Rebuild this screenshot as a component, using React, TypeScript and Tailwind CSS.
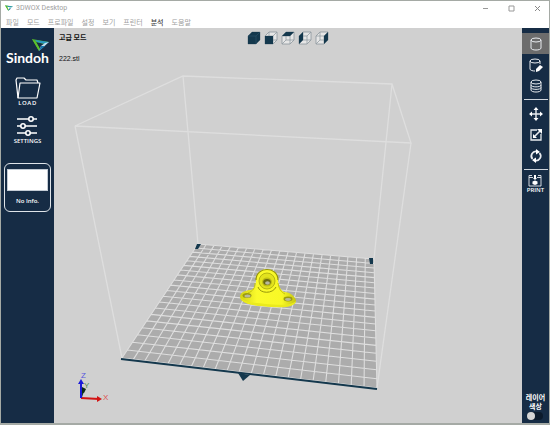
import React, { useState } from "react";

type Point = [number, number];

interface ToolProps {
  label: string;
  active?: boolean;
  onClick?: () => void;
  children: React.ReactNode;
}

const menuItems = [
  { label: "파일" },
  { label: "모드" },
  { label: "프로파일" },
  { label: "설정" },
  { label: "보기" },
  { label: "프린터" },
  { label: "분석", enabled: true },
  { label: "도움말" },
];

// filled face of each view cube
const viewCubes = [
  { label: "Perspective view", face: "M1 5 5 1H13V9L9 13H1Z" },
  { label: "Front view", face: "M1 5H9V13H1Z" },
  { label: "Top view", face: "M1 5 5 1H13L9 5Z" },
  { label: "Left view", face: "M1 5 5 1V9L1 13Z" },
  { label: "Right view", face: "M9 5 13 1V9L9 13Z" },
];

const cubeOutline = "M1 5 5 1H13V9L9 13H1Z";
const cubeEdges = "M1 5H9V13M9 5 13 1M5 1V9H13M5 9 1 13";

// build plate corners on screen: back left, back right, front right, front left
const plate: Point[] = [
  [198, 244],
  [374, 259],
  [377, 388],
  [122, 358],
];

const COLS = 21;
const ROWS = 20;

// maps the unit square onto the plate with perspective
function project(u: number, v: number): Point {
  const [[x0, y0], [x1, y1], [x2, y2], [x3, y3]] = plate;
  const dx1 = x1 - x2;
  const dx2 = x3 - x2;
  const dy1 = y1 - y2;
  const dy2 = y3 - y2;
  const sx = x0 - x1 + x2 - x3;
  const sy = y0 - y1 + y2 - y3;
  const det = dx1 * dy2 - dx2 * dy1;
  const g = (sx * dy2 - dx2 * sy) / det;
  const h = (dx1 * sy - sx * dy1) / det;
  const w = g * u + h * v + 1;
  return [
    ((x1 - x0 + g * x1) * u + (x3 - x0 + h * x3) * v + x0) / w,
    ((y1 - y0 + g * y1) * u + (y3 - y0 + h * y3) * v + y0) / w,
  ];
}

function gridPath() {
  const parts: string[] = [];
  for (let i = 0; i <= COLS; i++) {
    parts.push(`M${project(i / COLS, 0)}L${project(i / COLS, 1)}`);
  }
  for (let j = 0; j <= ROWS; j++) {
    parts.push(`M${project(0, j / ROWS)}L${project(1, j / ROWS)}`);
  }
  return parts.join("");
}

function Scene() {
  return (
    <svg
      viewBox="54 28 468 395"
      className="absolute inset-0 h-full w-full"
      role="img"
      aria-label="Build plate"
    >
      <defs>
        <linearGradient id="body" x1="0" y1="0" x2="1" y2="0">
          <stop offset="0" stopColor="#d2d216" />
          <stop offset=".3" stopColor="#fafa2c" />
          <stop offset=".75" stopColor="#f8f826" />
          <stop offset="1" stopColor="#c4c412" />
        </linearGradient>
      </defs>
      {/* Plate */}
      <polygon points={plate.join(" ")} fill="#acacac" />
      <path d={gridPath()} stroke="#dedede" strokeWidth="1.1" fill="none" />
      {/* Build volume */}
      <path
        d="M75 126 183 76 392 84 411 143ZM183 76 198 244M392 84 374 259M411 143 377 388M75 126 122 358"
        stroke="#dedede"
        strokeWidth="1.3"
        fill="none"
      />
      <path d="M121 359 377 389" stroke="#14384d" strokeWidth="2" />
      <path d="M238 373 250 375 243 381Z" fill="#14384d" />
      <path d="M197 244H201L198 249H195Z" fill="#14384d" />
      <path d="M369 258H373V264H370Z" fill="#14384d" />
      {/* Model */}
      <path
        d="M240 297C240 292 246 290 251 290C255 289 256 284 256 279C256 266 278 266 278 279C278 285 280 290 284 292C290 292 296 297 296 301C295 306 286 307 277 307C263 306 247 306 241 300Z"
        fill="url(#body)"
      />
      <path d="M240 297C244 303 256 303 266 304C278 305 291 306 296 301C295 307 284 308 272 307C260 306 243 306 240 297Z" fill="#eaea1c" />
      <path d="M256 280C256 266 278 266 278 280" stroke="#92920c" strokeWidth="1.2" fill="none" />
      <path d="M255 283C255 288 253 291 248 293M278 283C279 289 281 292 285 294" stroke="#c2c212" strokeWidth="1" fill="none" />
      <ellipse cx="267" cy="281" rx="8" ry="8" fill="#e2e21e" stroke="#a8a80f" strokeWidth=".8" />
      <path d="M258 287C260 294 273 294 276 287" stroke="#96960c" strokeWidth="1" fill="none" />
      <ellipse cx="267" cy="282" rx="5" ry="4.5" fill="#bebe14" />
      <ellipse cx="267" cy="282" rx="3.8" ry="3" fill="#6b6b12" />
      <ellipse cx="267.5" cy="283" rx="2.4" ry="1.7" fill="#b8b8a0" />
      <ellipse cx="247" cy="295.5" rx="4.5" ry="2.5" fill="#9b9b10" />
      <ellipse cx="247.5" cy="296" rx="3" ry="1.5" fill="#b9b99a" />
      <ellipse cx="288" cy="299" rx="4.5" ry="2.4" fill="#9b9b10" />
      <ellipse cx="288" cy="299.5" rx="3" ry="1.4" fill="#b9b99a" />
      {/* Axes */}
      <path d="M81 397 84 389" stroke="#123a1c" strokeWidth="2" />
      <path d="M82 387 86 389 84 393 81 392Z" fill="#0d2a14" />
      <path d="M81 398 99 399" stroke="#d31414" strokeWidth="1.8" />
      <path d="M97 396 102 399 97 402Z" fill="#d31414" />
      <path d="M81 398V383" stroke="#1a1ad8" strokeWidth="2" />
      <path d="M78 384 81 379 84 384Z" fill="#1a1ad8" />
      <g className="font-['Liberation_Sans'] text-[8px]">
        <text x="81" y="378" fill="#5757dd">Z</text>
        <text x="84" y="388" fill="#4c8a50">Y</text>
        <text x="103" y="400" fill="#dc5050">X</text>
      </g>
    </svg>
  );
}

function Mark({ className }: { className: string }) {
  return (
    <svg viewBox="0 0 17 12" className={className} aria-hidden="true">
      <path d="M0 0 17 3 12 5 4 3 8 10 7 12Z" fill="#4fb02f" />
      <path d="M0 0 4 3 8 10 7 12Z" fill="#5cc02c" />
      <path d="M3 1 17 3 13 5 5 3Z" fill="#2596c4" />
      <path d="M17 3 7 12 9 7 13 4Z" fill="#bfe2f0" />
      <path d="M9 7 7 12 13 7Z" fill="#1675ac" />
    </svg>
  );
}

function Tool({ label, active, onClick, children }: ToolProps) {
  return (
    <button
      aria-label={label}
      aria-pressed={active}
      onClick={onClick}
      className={`flex h-[21px] w-full items-center justify-center ${active ? "bg-[#6c6c6c]" : ""}`}
    >
      <svg
        viewBox="0 0 14 14"
        className="size-[14px]"
        fill="none"
        stroke="#e8ebef"
        strokeWidth="1"
      >
        {children}
      </svg>
    </button>
  );
}

function Sidebar() {
  return (
    <aside className="flex w-[53px] shrink-0 flex-col items-center bg-[#162c45] pt-[11px] text-white">
      <div className="flex flex-col">
        <Mark className="h-3 w-[17px] self-end" />
        <span className="font-['Lato'] text-[14px] leading-[14px] font-bold">Sindoh</span>
      </div>
      <button className="mt-3 flex flex-col items-center">
        <svg viewBox="0 0 26 22" className="h-[22px] w-[26px]" fill="none" stroke="#fff" strokeWidth="1.2" strokeLinejoin="round">
          <path d="M3 21 1 3 2 1H9L11 3H22L23 6" />
          <path d="M3 21 5 6H25L22 21Z" />
        </svg>
        <span className="font-['Open_Sans'] text-[6px] leading-2 font-semibold tracking-widest">LOAD</span>
      </button>
      <button className="mt-2 flex flex-col items-center">
        <svg viewBox="0 0 22 22" className="size-[22px]" stroke="#fff" strokeWidth="1.6" fill="#162c45">
          <path d="M1 4H21M1 11H21M1 18H21" />
          <circle cx="15" cy="4" r="2.2" />
          <circle cx="7" cy="11" r="2.2" />
          <circle cx="12" cy="18" r="2.2" />
        </svg>
        <span className="font-['Open_Sans'] text-[6px] leading-2 font-semibold">SETTINGS</span>
      </button>
      <section className="mt-[18px] flex h-[49px] w-[47px] flex-col items-center gap-1 rounded-md border border-[#dfe4e9] pt-[5px]">
        <div className="h-[22px] w-[41px] border border-[#c4ccd5] bg-white" />
        <span className="font-['Open_Sans'] text-[6px] leading-3 font-semibold">No Info.</span>
      </section>
    </aside>
  );
}

function ToolPanel() {
  const [mode, setMode] = useState("model");
  const [colored, setColored] = useState(false);

  return (
    <aside className="flex w-[27px] shrink-0 flex-col items-center bg-[#162c45] pt-[5px] text-white">
      <Tool label="Model" active={mode === "model"} onClick={() => setMode("model")}>
        <ellipse cx="7" cy="3" rx="5" ry="2" />
        <path d="M2 3V11C2 13.7 12 13.7 12 11V3" />
      </Tool>
      <Tool label="Edit support" active={mode === "support"} onClick={() => setMode("support")}>
        <ellipse cx="6" cy="3" rx="5" ry="2" />
        <path d="M1 3V11C1 12.5 4 13 6 13M11 3V6" />
        <path d="M7 11 11 7 14 9 10 13 7 14Z" fill="#fff" stroke="none" />
      </Tool>
      <Tool label="Layers" active={mode === "layers"} onClick={() => setMode("layers")}>
        <ellipse cx="7" cy="3" rx="5" ry="2" />
        <path d="M2 3V11C2 13.7 12 13.7 12 11V3M2 6C2 8.5 12 8.5 12 6M2 8.5C2 11 12 11 12 8.5" />
      </Tool>
      <hr className="my-[3px] w-6 border-[#cfd5dc]" />
      <Tool label="Move">
        <path d="M7 2V12M2 7H12" strokeWidth="1.4" />
        <path d="M7 0 9.5 3H4.5ZM7 14 4.5 11H9.5ZM0 7 3 4.5V9.5ZM14 7 11 9.5V4.5Z" fill="#fff" stroke="none" />
      </Tool>
      <Tool label="Scale">
        <path d="M8 2H2V12H12V6" strokeWidth="1.3" />
        <path d="M5 9 11 3" strokeWidth="1.6" />
        <path d="M8 1H13V6ZM4 6V10H8Z" fill="#fff" stroke="none" />
      </Tool>
      <Tool label="Rotate">
        <path d="M3.5 10A4.6 4.6 0 0 1 8 2.5M10.5 4A4.6 4.6 0 0 1 6 11.5" strokeWidth="1.8" />
        <path d="M7 0 11 3 7 5.5ZM7 14 3 11 7 8.5Z" fill="#fff" stroke="none" />
      </Tool>
      <hr className="my-[3px] w-6 border-[#cfd5dc]" />
      <button className="mt-px flex flex-col items-center">
        <svg viewBox="0 0 14 13" className="h-[13px] w-[14px]" fill="none" stroke="#e8ebef">
          <path d="M4 1.5H1V12H13V1.5H10M1 3.5H5M9 3.5H13" strokeWidth=".9" />
          <path d="M6 1H8V4H9L7 6 5 4H6Z" fill="#fff" stroke="none" />
          <path d="M7 6.5 9.5 7.5V10L7 11 4.5 10V7.5Z" fill="#fff" stroke="none" />
        </svg>
        <span className="font-['Open_Sans'] text-[6px] leading-[6px] font-semibold">PRINT</span>
      </button>
      <label className="mt-auto mb-[3px] flex flex-col items-center text-center text-[7px] leading-[9px] font-bold">
        <span>레이어</span>
        <span>색상</span>
        <input
          type="checkbox"
          checked={colored}
          onChange={(e) => setColored(e.target.checked)}
          className="mt-px h-2 w-4 appearance-none rounded-full bg-[#0c1b2c] before:block before:size-2 before:rounded-full before:bg-[#d5d5d5] checked:before:ml-2"
        />
      </label>
    </aside>
  );
}

export default function App() {
  return (
    <div className="flex h-screen flex-col border-x border-t border-b-2 border-[#a5aaa5] bg-white font-['Noto_Sans_CJK_KR',sans-serif]">
      <header className="h-[27px] shrink-0 text-[#a0a0a0]">
        <div className="flex h-[14px] items-center pr-2 pl-1">
          <Mark className="mr-[3px] h-[6px] w-2" />
          <h1 className="font-['Roboto'] text-[7px] leading-3">3DWOX Desktop</h1>
          <div className="ml-auto flex items-center gap-[19px]">
            <button aria-label="Minimize">
              <svg viewBox="0 0 7 7" className="size-[7px]" stroke="#999">
                <path d="M1 3.5H6" />
              </svg>
            </button>
            <button aria-label="Maximize">
              <svg viewBox="0 0 7 7" className="size-[7px]" stroke="#999" fill="none">
                <path d="M1 1H6V6H1Z" />
              </svg>
            </button>
            <button aria-label="Close">
              <svg viewBox="0 0 7 7" className="size-[7px]" stroke="#888">
                <path d="M1 1 6 6M6 1 1 6" />
              </svg>
            </button>
          </div>
        </div>
        <nav className="flex gap-2 pl-[5px] text-[7px] leading-[14px]">
          {menuItems.map((item) => (
            <button key={item.label} className={item.enabled ? "font-medium text-[#444]" : ""}>
              {item.label}
            </button>
          ))}
        </nav>
      </header>
      <div className="flex min-h-0 flex-1">
        <Sidebar />
        <main className="relative min-w-0 flex-1 bg-[#d0d0d0]">
          <Scene />
          <div className="relative grid grid-cols-[1fr_auto_1fr] items-start px-[5px] pt-[3px] text-[#111]">
            <div className="flex flex-col gap-[11px]">
              <h2 className="text-[7px] leading-3 font-bold">고급 모드</h2>
              <p className="font-['Liberation_Sans'] text-[7px] leading-[10px]">222.stl</p>
            </div>
            <div className="flex gap-[3px]">
              {viewCubes.map((cube) => (
                <button key={cube.label} aria-label={cube.label}>
                  <svg viewBox="0 0 14 14" className="size-[14px]" fill="none">
                    <path d={cubeOutline} fill="#e6e6e6" stroke="#8b969c" strokeWidth=".8" />
                    <path d={cubeEdges} stroke="#929ca2" strokeWidth=".8" />
                    <path d={cube.face} fill="#14384d" />
                    {cube.label === "Perspective view" && (
                      <path d="M1 5H9V13M9 5 13 1" stroke="#2b566c" strokeWidth=".6" />
                    )}
                  </svg>
                </button>
              ))}
            </div>
          </div>
        </main>
        <ToolPanel />
      </div>
    </div>
  );
}
